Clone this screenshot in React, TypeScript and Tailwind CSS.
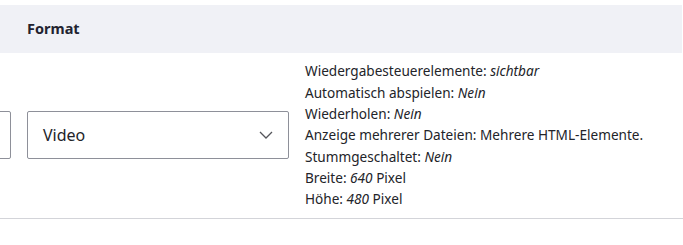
export default function App() {
  return (
    <div
      className="w-[683px] h-[245px] bg-white overflow-hidden pt-[5px] text-[#232429]"
      style={{ fontFamily: '"Noto Sans", "Open Sans", sans-serif' }}
    >
      {/* Header */}
      <div className="flex h-[48px] items-center bg-[#f0f1f6] w-[682px]">
        <div className="pl-[27px] text-[14.5px] font-bold text-[#222330]">Format</div>
      </div>

      {/* Row */}
      <div className="flex items-center border-b border-[#d3d4d9] pt-[7px] pb-[8px] h-[166px]">
        <div className="w-[11px] shrink-0 overflow-hidden">
          <div className="ml-[-40px] w-[51px] h-[48px] border border-[#8e9099] rounded-[2px]" />
        </div>
        <div className="ml-[16px] w-[262px] shrink-0 h-[48px] border border-[#8e9099] rounded-[2px] flex items-center justify-between pl-[15px] pr-[15px]">
          <span className="text-[16px] text-[#232429]">Video</span>
          <svg viewBox="0 0 14 8" className="w-[14px] h-[8px]" fill="none" stroke="#55565b" strokeWidth="1.3">
            <path d="M1 1l6 6 6-6" />
          </svg>
        </div>
        <div className="ml-[16px] text-[13.6px] leading-[21.3px] text-[#232429]">
          <div>Wiedergabesteuerelemente: <em>sichtbar</em></div>
          <div>Automatisch abspielen: <em>Nein</em></div>
          <div>Wiederholen: <em>Nein</em></div>
          <div>Anzeige mehrerer Dateien: Mehrere HTML-Elemente.</div>
          <div>Stummgeschaltet: <em>Nein</em></div>
          <div>Breite: <em>640</em> Pixel</div>
          <div>Höhe: <em>480</em> Pixel</div>
        </div>
      </div>
    </div>
  );
}
